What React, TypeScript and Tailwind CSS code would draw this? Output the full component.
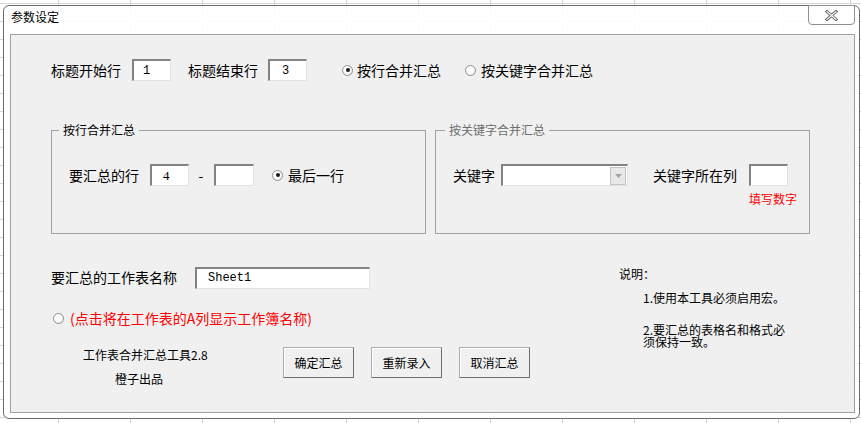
const cjk = "font-['Noto_Sans_CJK_SC','Noto_Sans',sans-serif]";

function Radio({ checked }: { checked?: boolean }) {
  return (
    <span className="flex h-[11px] w-[11px] shrink-0 items-center justify-center rounded-full border border-[#8e8f8f] bg-[radial-gradient(circle_at_40%_40%,#ffffff_40%,#e2e2e2)]">
      {checked && <span className="h-[4px] w-[4px] rounded-full bg-[#1a1a1a]" />}
    </span>
  );
}

function TextBox({ value, className = '' }: { value?: string; className?: string }) {
  return (
    <div
      className={`flex h-[22px] shrink-0 items-center border-t-2 border-l-2 border-b border-r border-t-[#838383] border-l-[#838383] border-b-[#e3e3e3] border-r-[#e3e3e3] bg-white font-['Liberation_Mono',monospace] text-[12px] text-black ${className}`}
    >
      {value}
    </div>
  );
}

function Button({ label }: { label: string }) {
  return (
    <button className="h-[31px] w-[71px] border border-[#adadad] border-b-[#6f6f6f] border-r-[#6f6f6f] bg-[#f0f0f0] text-[12px] text-black shadow-[inset_1px_1px_0_#ffffff]">
      {label}
    </button>
  );
}

export default function App() {
  return (
    <div
      className={`relative h-[423px] w-[861px] overflow-hidden bg-white bg-[linear-gradient(to_right,#d6d6d6_1px,transparent_1px),linear-gradient(to_bottom,#d6d6d6_1px,transparent_1px)] bg-[size:72px_18px] bg-[position:58px_3px] ${cjk}`}
    >
      <div className="absolute left-[3px] top-[5px] flex h-[414px] w-[857px] flex-col rounded-[6px] border border-[#6b6b6b] bg-white/90">
        {/* title bar */}
        <div className="flex h-[28px] shrink-0 items-start justify-between">
          <span className="pl-[7px] pt-[4px] text-[12px] leading-[14px] text-black">参数设定</span>
          <div className="-mt-px mr-[4px] flex h-[20px] w-[47px] items-center justify-center rounded-b-[4px] border border-[#8f8f8f] bg-white/70">
            <svg width="13" height="11" viewBox="0 0 13 11">
              <path d="M2 1.5 L11 9.5 M11 1.5 L2 9.5" stroke="#5a5a62" strokeWidth="3" strokeLinecap="square" />
              <path d="M2 1.5 L11 9.5 M11 1.5 L2 9.5" stroke="#ffffff" strokeWidth="1.2" strokeLinecap="square" />
            </svg>
          </div>
        </div>

        {/* client area */}
        <div className="mb-[5px] ml-[6px] mr-[4px] flex flex-1 flex-col border border-[#a0a0a0] bg-[#f0f0f0] pt-[24px] text-black">
          {/* row 1 */}
          <div className="flex h-[22px] items-center whitespace-nowrap pl-[40px] text-[14px]">
            <span>标题开始行</span>
            <TextBox value="1" className="ml-[11px] w-[39px] pl-[9px]" />
            <span className="ml-[17px]">标题结束行</span>
            <TextBox value="3" className="ml-[10px] w-[39px] pl-[12px]" />
            <div className="ml-[35px] flex items-center gap-[4px]">
              <Radio checked />
              <span>按行合并汇总</span>
            </div>
            <div className="ml-[24px] flex items-center gap-[5px]">
              <Radio />
              <span>按关键字合并汇总</span>
            </div>
          </div>

          {/* group boxes */}
          <div className="mt-[42px] flex gap-[9px] pl-[40px]">
            <fieldset className="h-[111px] w-[375px] border border-[#a0a0a0] pt-[27px]">
              <legend className="ml-[7px] px-[4px] text-[12px] leading-[14px]">按行合并汇总</legend>
              <div className="flex h-[22px] items-center whitespace-nowrap pl-[17px] text-[14px]">
                <span>要汇总的行</span>
                <TextBox value="4" className="ml-[11px] w-[39px] pl-[11px] font-['Liberation_Serif',serif] text-[13px]" />
                <span className="ml-[9px] w-[6px] text-center">-</span>
                <TextBox className="ml-[10px] w-[40px]" />
                <div className="ml-[18px] flex items-center gap-[5px]">
                  <Radio checked />
                  <span>最后一行</span>
                </div>
              </div>
            </fieldset>

            <fieldset className="h-[111px] w-[375px] border border-[#a0a0a0] pt-[27px]">
              <legend className="ml-[9px] px-[4px] text-[12px] leading-[14px] text-[#6d6d6d]">按关键字合并汇总</legend>
              <div className="flex items-start whitespace-nowrap pl-[17px] text-[14px]">
                <span className="flex h-[22px] items-center">关键字</span>
                <div className="ml-[6px] flex h-[22px] w-[127px] shrink-0 items-center justify-end border-t-2 border-l-2 border-b border-r border-t-[#838383] border-l-[#838383] border-b-[#e3e3e3] border-r-[#e3e3e3] bg-white pr-px">
                  <div className="flex h-[18px] w-[16px] items-center justify-center border border-[#c4c4c4] bg-[#e8e8e8]">
                    <svg width="7" height="4" viewBox="0 0 7 4">
                      <path d="M0 0 H7 L3.5 4 Z" fill="#a3a3a3" />
                    </svg>
                  </div>
                </div>
                <span className="ml-[25px] flex h-[22px] items-center">关键字所在列</span>
                <div className="ml-[12px] flex flex-col">
                  <TextBox className="w-[39px]" />
                  <span className="mt-[6px] text-[12px] leading-[14px] text-[#ff0000]">填写数字</span>
                </div>
              </div>
            </fieldset>
          </div>

          {/* lower section */}
          <div className="mt-[33px] flex">
            <div className="flex w-[608px] flex-col pl-[40px]">
              <div className="flex h-[21px] items-center text-[14px]">
                <span>要汇总的工作表名称</span>
                <TextBox value="Sheet1" className="ml-[18px] h-[21px] w-[175px] pl-[11px]" />
              </div>
              <div className="mt-[20px] flex h-[20px] items-center gap-[6px] pl-[2px] text-[14px] text-[#ff0000]">
                <Radio />
                <span>(点击将在工作表的A列显示工作簿名称)</span>
              </div>
              <div className="mt-[19px] flex items-start">
                <div className="flex w-[232px] flex-col text-[12px] leading-[14px]">
                  <span className="pl-[32px] pt-[1px]">工作表合并汇总工具2.8</span>
                  <span className="mt-[10px] pl-[64px]">橙子出品</span>
                </div>
                <div className="flex gap-[17px]">
                  <Button label="确定汇总" />
                  <Button label="重新录入" />
                  <Button label="取消汇总" />
                </div>
              </div>
            </div>

            <div className="flex flex-col text-[12px]">
              <span className="leading-[14px]">说明：</span>
              <span className="mt-[10px] pl-[24px] leading-[14px]">1.使用本工具必须启用宏。</span>
              <p className="mt-[19px] w-[170px] pl-[24px] leading-[12px]">2.要汇总的表格名和格式必须保持一致。</p>
            </div>
          </div>
        </div>
      </div>
    </div>
  );
}
